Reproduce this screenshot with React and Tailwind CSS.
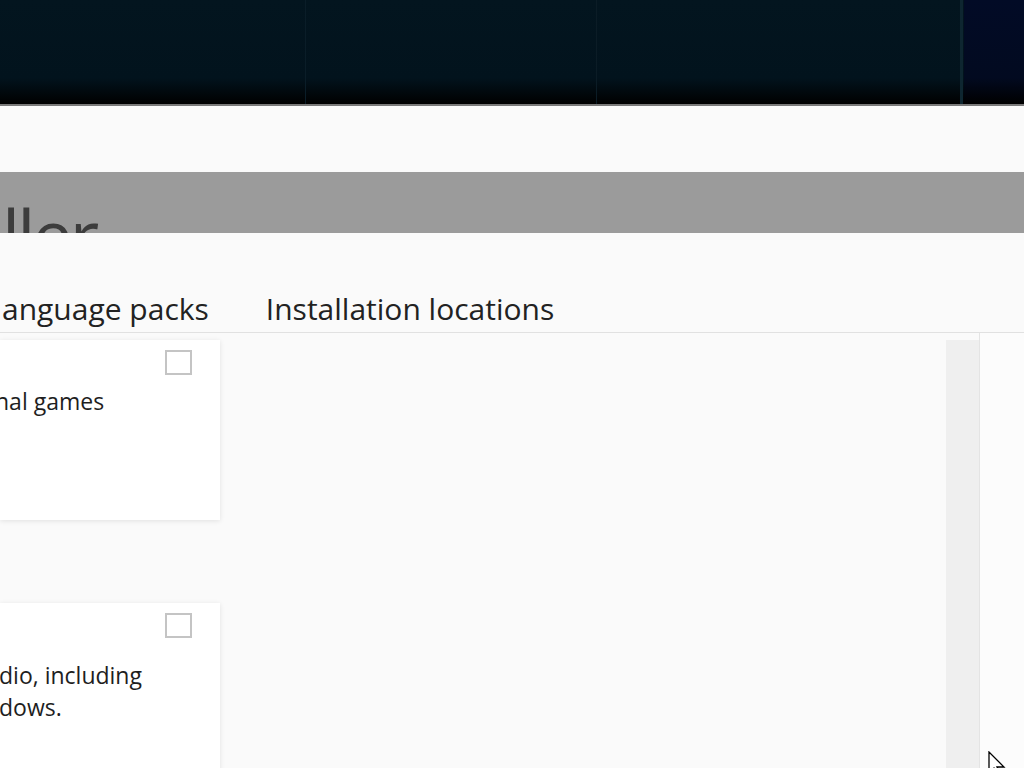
import React from 'react';

function Checkbox() {
  return (
    <span className="absolute right-[28px] top-[10px] h-[25px] w-[27px] border-2 border-[#c4c4c4] bg-white" />
  );
}

function Card({ className, children }) {
  return (
    <div
      className={`relative w-[220px] shrink-0 bg-white shadow-[0_1px_5px_rgba(0,0,0,0.10)] ${className}`}
    >
      <Checkbox />
      {children}
    </div>
  );
}

export default function App() {
  return (
    <div
      className="flex h-[768px] w-[1024px] flex-col overflow-hidden bg-[#fafafa] text-[#1e1e1e]"
      style={{ fontFamily: '"Open Sans", "Noto Sans", sans-serif' }}
    >
      {/* desktop / title area */}
      <div className="relative h-[104px] shrink-0 bg-[linear-gradient(180deg,#03151f_0%,#02131d_75%,#000000_100%)]">
        <div className="absolute inset-y-0 left-[305px] w-px bg-[#0a1d28]" />
        <div className="absolute inset-y-0 left-[596px] w-px bg-[#0b1c26]" />
        <div className="absolute inset-y-0 left-[960px] w-[3px] bg-[#0e2630]" />
        <div className="absolute inset-y-0 left-[964px] right-0 bg-[linear-gradient(180deg,#020b26_0%,#020a20_75%,#000000_100%)]" />
      </div>
      <div className="h-[2px] shrink-0 bg-[#7a7a7a]" />
      <div className="h-[66px] shrink-0 bg-[#fafafa]" />

      {/* dimmed header */}
      <div className="relative h-[61px] shrink-0 overflow-hidden bg-[#9b9b9b]">
        <span className="absolute left-[2px] top-[26px] text-[72px] leading-none tracking-[-3px] text-[#3c3c3c]">
          ller
        </span>
      </div>

      {/* tabs */}
      <div className="flex h-[100px] shrink-0 items-end gap-[57px] border-b border-[#e1e1e1] bg-[#fafafa] pb-[2px] text-[30px] leading-[42px] text-[#222]">
        <span className="ml-[2px]">anguage packs</span>
        <span>Installation locations</span>
      </div>

      {/* content */}
      <div className="flex min-h-0 flex-1">
        <div className="flex w-[946px] flex-col gap-[83px] pt-[7px]">
          <Card className="h-[180px] pt-[45px] text-[23px] leading-[32px]">
            <p className="ml-[-5px]">nal games</p>
          </Card>
          <Card className="h-[200px] pt-[56px] text-[23px] leading-[32px]">
            <p className="ml-[-1px]">dio, including</p>
            <p className="ml-[-1px]">dows.</p>
          </Card>
        </div>
        <div className="mt-[7px] w-[33px] bg-[#efefef]" />
        <div className="relative flex-1 border-l border-[#e4e4e4] bg-[#fcfcfc]">
          <svg
            className="absolute left-[8px] top-[418px]"
            width="18"
            height="26"
            viewBox="0 0 18 26"
          >
            <path d="M1 1 L1 22 L6 17 L10 25 L13 23.5 L9 16 L16 16 Z" fill="#fff" stroke="#000" strokeWidth="1.3" />
          </svg>
        </div>
      </div>
    </div>
  );
}
